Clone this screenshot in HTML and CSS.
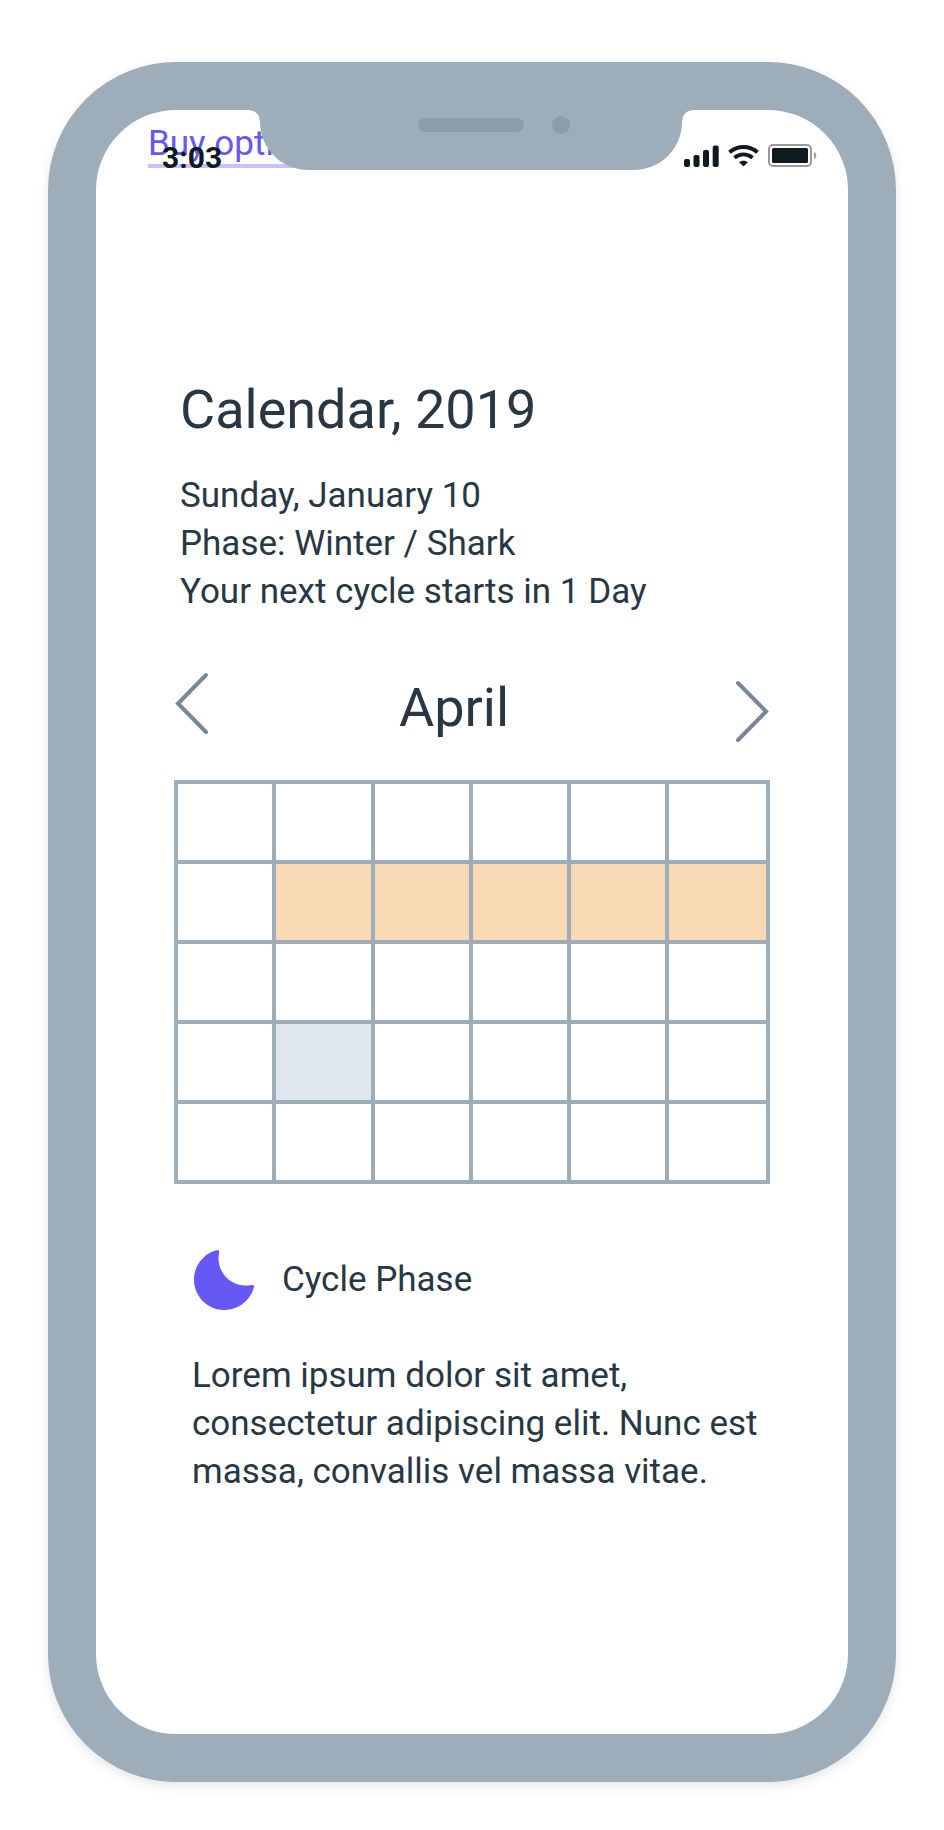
FILE: index.html
```html
<!DOCTYPE html>
<html lang="en">
<head>
    <meta charset="UTF-8">
    <meta name="viewport" content="width=device-width, initial-scale=1.0">
    <title>Calendar</title>
    <link rel="stylesheet" href="styles.css">
</head>
<body>
    <div class="phone">
        <div class="status-bar">
            <span class="time">3:03</span>
            <div class="status-icons">
                <svg width="36" height="24" viewBox="0 0 36 24" fill="#0f1920">
                    <rect x="0" y="15" width="6" height="8" rx="2"/>
                    <rect x="9.5" y="11" width="6" height="12" rx="2"/>
                    <rect x="19" y="6" width="6" height="17" rx="2"/>
                    <rect x="28.700" y="1.500" width="6" height="21.500" rx="2"/>
                </svg>
                <svg width="32" height="24" viewBox="0 0 32 24" fill="none" stroke="#0f1920" stroke-width="4">
                    <path d="M1.500 8.300C9.500 1.300 21.500 1.300 29.500 8.300"/>
                    <path d="M6.500 13.700C12 9.300 19 9.300 24.500 13.700"/>
                    <path d="M11.200 18.300C13.500 16.300 17.500 16.300 19.800 18.300L15.500 22.500Z" fill="#0f1920" stroke="none"/>
                </svg>
                <svg width="50" height="24" viewBox="0 0 50 24">
                    <rect x="1" y="1" width="42" height="21" rx="4" fill="none" stroke="#999" stroke-width="2"/>
                    <rect x="4" y="4" width="36" height="15" rx="1.500" fill="#0f1920"/>
                    <path d="M46 8c3 1 3 6 0 7z" fill="#999"/>
                </svg>
            </div>
        </div>
        <div class="notch">
            <span class="speaker"></span>
            <span class="camera"></span>
        </div>

        <a class="buy-link" href="#">Buy options</a>

        <main class="content">
            <header class="intro">
                <h1>Calendar, 2019</h1>
                <p>Sunday, January 10<br>Phase: Winter / Shark<br>Your next cycle starts in 1 Day</p>
            </header>

            <div class="month">
                <button class="prev" type="button" aria-label="Previous month">
                    <svg width="36" height="64" viewBox="0 0 36 64"><path d="M32 3L4 31.500L32 60"/></svg>
                </button>
                <h2>April</h2>
                <button class="next" type="button" aria-label="Next month">
                    <svg width="36" height="64" viewBox="0 0 36 64"><path d="M4 3L32 31.500L4 60"/></svg>
                </button>
            </div>

            <table class="dates">
                <tr><td></td><td></td><td></td><td></td><td></td><td></td></tr>
                <tr><td></td><td class="cycle"></td><td class="cycle"></td><td class="cycle"></td><td class="cycle"></td><td class="cycle"></td></tr>
                <tr><td></td><td></td><td></td><td></td><td></td><td></td></tr>
                <tr><td></td><td class="today"></td><td></td><td></td><td></td><td></td></tr>
                <tr><td></td><td></td><td></td><td></td><td></td><td></td></tr>
            </table>

            <section class="phase">
                <div class="phase-title">
                    <svg width="60" height="60" viewBox="0 0 60 60" fill="#6558f5">
                        <path d="M22.500 0.300C24.500-0.200 25.500 0.800 25.200 2.500C21 22 38 39 57.500 35C59.500 34.600 60.300 35.600 59.900 37.300C56.500 50.500 44.500 60 30.500 60C13.500 60 0 46.500 0 29.500C0 15.500 9.500 3.700 22.500 0.300Z"/>
                    </svg>
                    <h3>Cycle Phase</h3>
                </div>
                <p>Lorem ipsum dolor sit amet, consectetur adipiscing elit. Nunc est massa, convallis vel massa vitae.</p>
            </section>
        </main>
    </div>
</body>
</html>
```

FILE: styles.css
```css
* {
    box-sizing: border-box;
}

body {
    margin: 0;
    padding: 62px 48px 48px;
    background-color: white;
    color: #273744;
    font-family: Roboto, sans-serif;
    font-size: 35px;
    line-height: 48px;
}

h1, h2, h3, p {
    margin: 0;
    font-weight: 400;
}

h1, h2 {
    font-size: 54px;
    line-height: 64px;
}

h3 {
    font-size: 35px;
}

.phone {
    position: relative;
    border: 48px solid #9eadba;
    border-radius: 128px;
    padding-top: 14px;
    box-shadow: 0 4px 12px rgba(0, 0, 0, 0.1);
}

/* status bar and notch lie over the screen */
.status-bar {
    position: absolute;
    top: 34px;
    left: 66px;
    right: 30px;
    display: flex;
    justify-content: space-between;
}

.time {
    color: #0f1920;
    font-size: 30px;
    font-weight: 700;
    line-height: 28px;
}

.status-icons {
    display: flex;
    gap: 8px;
    height: 24px;
}

.notch {
    position: absolute;
    top: 0;
    left: 164px;
    right: 166px;
    height: 60px;
    background: #9eadba;
    border-radius: 0 0 48px 48px;
}

.notch::before,
.notch::after {
    content: "";
    position: absolute;
    top: 0;
    width: 10px;
    height: 10px;
}

.notch::before {
    right: 100%;
    background: radial-gradient(circle at 0 100%, transparent 9px, #9eadba 10px);
}

.notch::after {
    left: 100%;
    background: radial-gradient(circle at 100% 100%, transparent 9px, #9eadba 10px);
}

.speaker,
.camera {
    position: absolute;
    background: #8d9cab;
}

.speaker {
    top: 8px;
    left: 158px;
    width: 106px;
    height: 14px;
    border-radius: 7px;
}

.camera {
    top: 6px;
    left: 292px;
    width: 18px;
    height: 18px;
    border-radius: 50%;
}

.buy-link {
    display: block;
    width: fit-content;
    margin-left: 52px;
    border-bottom: 4px solid #c9c1fb;
    color: #6558f5;
    line-height: 40px;
    text-decoration: none;
}

.content {
    padding: 210px 78px 238px;
}

.intro {
    padding-left: 6px;
}

.intro p {
    margin-top: 30px;
}

.month {
    display: flex;
    justify-content: space-between;
    align-items: center;
    height: 72px;
    margin: 56px 0 36px;
}

.month h2 {
    flex: 1;
    padding-right: 36px;
    text-align: center;
}

.month button {
    padding: 0;
    border: none;
    background: none;
    cursor: pointer;
}

.month svg {
    display: block;
    fill: none;
    stroke: #778899;
    stroke-width: 4;
    stroke-linecap: round;
}

.prev {
    align-self: flex-start;
}

.next {
    align-self: flex-end;
}

.dates {
    width: 100%;
    table-layout: fixed;
    border-collapse: separate;
    border-spacing: 0;
    border: solid #9eadba;
    border-width: 0 4px 4px 0;
}

.dates td {
    height: 80px;
    padding: 0;
    border: solid #9eadba;
    border-width: 4px 0 0 4px;
}

.dates td:not(:last-child) {
    width: 16.6%;
}

.cycle {
    background: #f7d9b4;
}

.today {
    background: #dfe6ed;
}

.phase {
    margin-top: 66px;
    padding-left: 18px;
}

.phase-title {
    display: flex;
    align-items: center;
    gap: 28px;
    margin-bottom: 42px;
    padding-left: 2px;
}
```
